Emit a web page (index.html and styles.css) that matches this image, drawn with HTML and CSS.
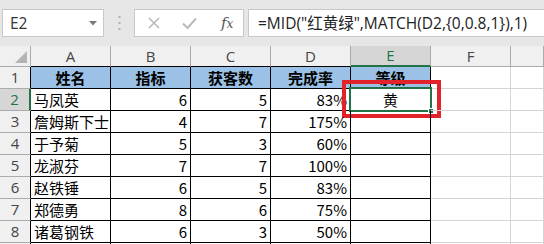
FILE: index.html
```html
<!DOCTYPE html>
<html lang="zh-CN">
<head>
<meta charset="utf-8">
<title>Excel</title>
<link rel="stylesheet" href="styles.css">
</head>
<body>
<div class="fbar">
  <div class="namebox">
    <span class="nb-text">E2</span>
    <svg class="nb-arrow" width="8" height="5" viewBox="0 0 8 5"><path d="M0 0 H8 L4 4.5 Z" fill="#7a7a7a"/></svg>
  </div>
  <div class="sep">
    <svg width="3" height="14" viewBox="0 0 3 14"><rect x="0.5" y="0" width="2" height="2" fill="#b0b0b0"/><rect x="0.5" y="6" width="2" height="2" fill="#b0b0b0"/><rect x="0.5" y="12" width="2" height="2" fill="#b0b0b0"/></svg>
  </div>
  <div class="fbtns">
    <svg class="ic-x" width="12" height="12" viewBox="0 0 12 12"><path d="M1 1 L11 11 M11 1 L1 11" stroke="#b9b9b9" stroke-width="1.6" fill="none"/></svg>
    <svg class="ic-ok" width="15" height="12" viewBox="0 0 15 12"><path d="M1 6.5 L5.5 11 L14 1.5" stroke="#b9b9b9" stroke-width="2" fill="none"/></svg>
    <span class="ic-fx">f<span class="fx-x">x</span></span>
  </div>
  <div class="formula">=MID("红黄绿",MATCH(D2,{0,0.8,1}),1)</div>
</div>

<div class="sheet">
  <div class="c corner"><svg width="12" height="12" viewBox="0 0 12 12"><path d="M12 0 V12 H0 Z" fill="#b4b4b4"/></svg></div>
  <div class="c ch t-top">A</div>
  <div class="c ch t-top">B</div>
  <div class="c ch t-top">C</div>
  <div class="c ch t-top">D</div>
  <div class="c ch sel-col">E</div>
  <div class="c ch">F</div>
  <div class="c ch"></div>

  <div class="c rh t-left">1</div>
  <div class="c t hd">姓名</div>
  <div class="c t hd">指标</div>
  <div class="c t hd">获客数</div>
  <div class="c t hd">完成率</div>
  <div class="c t hd">等级</div>
  <div class="c"></div>
  <div class="c"></div>

  <div class="c rh sel-row">2</div>
  <div class="c t tx">马凤英</div>
  <div class="c t nm">6</div>
  <div class="c t nm">5</div>
  <div class="c t nm">83%</div>
  <div class="c t ctr active">黄<span class="selbox"></span><span class="handle"></span><span class="redbox"></span></div>
  <div class="c"></div>
  <div class="c"></div>

  <div class="c rh t-left">3</div>
  <div class="c t tx">詹姆斯下士</div>
  <div class="c t nm">4</div>
  <div class="c t nm">7</div>
  <div class="c t nm">175%</div>
  <div class="c t"></div>
  <div class="c"></div>
  <div class="c"></div>

  <div class="c rh t-left">4</div>
  <div class="c t tx">于予菊</div>
  <div class="c t nm">5</div>
  <div class="c t nm">3</div>
  <div class="c t nm">60%</div>
  <div class="c t"></div>
  <div class="c"></div>
  <div class="c"></div>

  <div class="c rh t-left">5</div>
  <div class="c t tx">龙淑芬</div>
  <div class="c t nm">7</div>
  <div class="c t nm">7</div>
  <div class="c t nm">100%</div>
  <div class="c t"></div>
  <div class="c"></div>
  <div class="c"></div>

  <div class="c rh t-left">6</div>
  <div class="c t tx">赵铁锤</div>
  <div class="c t nm">6</div>
  <div class="c t nm">5</div>
  <div class="c t nm">83%</div>
  <div class="c t"></div>
  <div class="c"></div>
  <div class="c"></div>

  <div class="c rh t-left">7</div>
  <div class="c t tx">郑德勇</div>
  <div class="c t nm">8</div>
  <div class="c t nm">6</div>
  <div class="c t nm">75%</div>
  <div class="c t"></div>
  <div class="c"></div>
  <div class="c"></div>

  <div class="c rh t-left">8</div>
  <div class="c t tx">诸葛钢铁</div>
  <div class="c t nm">6</div>
  <div class="c t nm">3</div>
  <div class="c t nm">50%</div>
  <div class="c t"></div>
  <div class="c"></div>
  <div class="c"></div>

  <div class="c rh t-left"></div>
  <div class="c t"></div>
  <div class="c t"></div>
  <div class="c t"></div>
  <div class="c t"></div>
  <div class="c t"></div>
  <div class="c"></div>
  <div class="c"></div>
</div>
</body>
</html>
```
FILE: styles.css
```css
html, body {
  margin: 0;
  padding: 0;
}
body {
  width: 544px;
  height: 244px;
  overflow: hidden;
  background: #ffffff;
  font-family: "Noto Sans CJK SC", "Noto Sans", sans-serif;
}

/* ---------- formula bar ---------- */
.fbar {
  height: 46px;
  box-sizing: border-box;
  padding-top: 9px;
  background: #e6e6e6;
  display: flex;
  align-items: flex-start;
}
.namebox {
  margin-left: 2px;
  width: 102px;
  height: 28px;
  box-sizing: border-box;
  background: #fff;
  border: 1px solid #c8c8c8;
  display: flex;
  align-items: center;
  padding-left: 7px;
  padding-right: 6px;
}
.nb-text {
  flex: 1;
  font-family: "Open Sans", "Noto Sans", sans-serif;
  font-size: 15.5px;
  color: #333;
}
.nb-arrow {
  display: block;
}
.sep {
  width: 30px;
  height: 28px;
  display: flex;
  align-items: center;
  justify-content: center;
}
.sep svg {
  display: block;
}
.fbtns {
  width: 110px;
  height: 28px;
  box-sizing: border-box;
  background: #fff;
  border: 1px solid #c8c8c8;
  display: flex;
  align-items: center;
  padding-left: 13px;
}
.ic-x {
  display: block;
}
.ic-ok {
  display: block;
  margin-left: 22px;
}
.ic-fx {
  margin-left: 24px;
  font-family: "DejaVu Serif", "Liberation Serif", serif;
  font-style: italic;
  font-size: 15px;
  color: #555;
  line-height: 1;
}
.fx-x {
  font-size: 12px;
}
.formula {
  flex: 1;
  margin-left: 4px;
  height: 28px;
  box-sizing: border-box;
  background: #fff;
  border: 1px solid #c8c8c8;
  border-right: none;
  padding-left: 9px;
  font-family: "Open Sans", "Noto Sans CJK SC", sans-serif;
  font-size: 15.5px;
  line-height: 26px;
  color: #222;
  white-space: nowrap;
  overflow: hidden;
}

/* ---------- sheet grid ---------- */
.sheet {
  height: 198px;
  overflow: hidden;
  display: grid;
  grid-template-columns: 31px repeat(6, 80px) 1fr;
  grid-template-rows: 21px repeat(8, 22px) 22px;
}
.c {
  box-sizing: border-box;
  border-right: 1px solid #d4d4d4;
  border-bottom: 1px solid #d4d4d4;
  font-size: 15px;
  line-height: 21px;
  color: #000;
  white-space: nowrap;
  position: relative;
}
.ch, .rh, .corner {
  background: #f0f0f0;
  border-right-color: #ababab;
  border-bottom-color: #ababab;
  color: #444;
  text-align: center;
  font-family: "Open Sans", "Noto Sans", sans-serif;
  font-size: 15px;
}
.ch {
  line-height: 20px;
}
.corner {
  display: flex;
  align-items: flex-end;
  justify-content: flex-end;
  padding: 0 3px 3px 0;
}
.corner svg {
  display: block;
}
.t-top {
  border-bottom-color: #000;
}
.t-left {
  border-right-color: #000;
}
.sel-col {
  background: #d6d6d6;
  color: #217346;
  border-bottom: 2px solid #217346;
  line-height: 19px;
}
.sel-row {
  background: #d6d6d6;
  color: #217346;
  border-right: 2px solid #217346;
}
.t {
  border-right-color: #000;
  border-bottom-color: #000;
}
.hd {
  background: #9bc2e6;
  font-weight: bold;
  text-align: center;
}
.tx {
  padding-left: 3px;
}
.nm {
  text-align: right;
  padding-right: 3px;
}
.ctr {
  text-align: center;
}

/* selection & highlight overlays */
.selbox {
  position: absolute;
  left: -2px;
  top: -2px;
  right: -2px;
  bottom: -2px;
  border: 2px solid #217346;
  box-sizing: border-box;
}
.handle {
  position: absolute;
  right: -4px;
  bottom: -4px;
  width: 6px;
  height: 6px;
  background: #217346;
  border: 1px solid #fff;
  box-sizing: border-box;
}
.redbox {
  position: absolute;
  left: -9px;
  top: -9px;
  right: -11px;
  bottom: -8px;
  border: 4px solid #e3232b;
  box-sizing: border-box;
}
```
